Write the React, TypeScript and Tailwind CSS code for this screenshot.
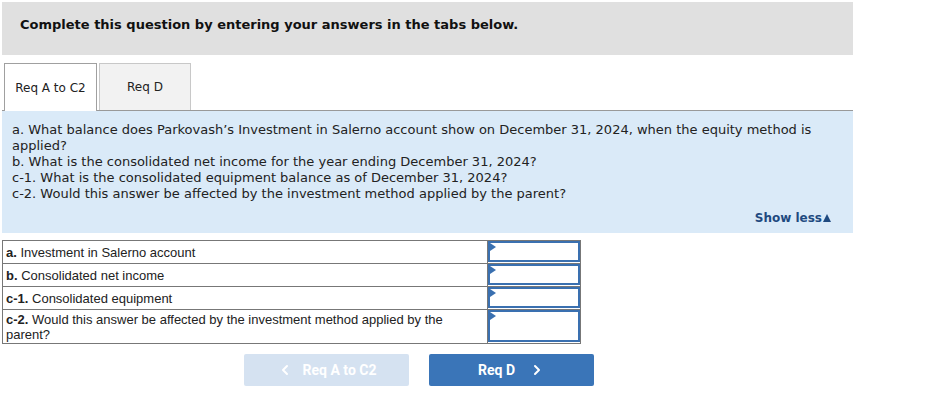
import React from 'react';
import { ChevronLeft, ChevronRight } from 'lucide-react';

const verdana = { fontFamily: '"DejaVu Sans", Verdana, sans-serif' };

const rows = [
  { tag: 'a.', text: ' Investment in Salerno account', tall: false },
  { tag: 'b.', text: ' Consolidated net income', tall: false },
  { tag: 'c-1.', text: ' Consolidated equipment', tall: false },
  { tag: 'c-2.', text: ' Would this answer be affected by the investment method applied by the parent?', tall: true },
];

const AnswerCell = ({ tall }: { tall: boolean }) => (
  <td className="border border-[#777] p-0 w-[93px] align-top">
    <div className={`relative border-2 border-[#3a70b0] bg-white ${tall ? 'h-[32px]' : 'h-[21px]'}`}>
      <span className="absolute left-0 top-0 w-0 h-0 border-y-[4px] border-y-transparent border-l-[6px] border-l-[#3a70b0]" />
    </div>
  </td>
);

export default function App() {
  return (
    <div className="w-[929px] h-[403px] bg-white pt-[2px] pl-[2px]">
      <div className="w-[851px] h-[53px] bg-[#e0e0e0] flex items-center pl-[18px] pb-[8px]">
        <p className="text-[13px] font-bold text-[#111]" style={verdana}>
          Complete this question by entering your answers in the tabs below.
        </p>
      </div>

      <div className="mt-[8px] w-[851px] flex items-end border-b border-[#999] h-[48px]">
        <div className="ml-[2px] w-[93px] h-[48px] -mb-px bg-white border border-b-0 border-[#a0a0a0] flex items-center justify-center text-[12px] text-[#222]" style={verdana}>
          Req A to C2
        </div>
        <div className="ml-[2px] w-[92px] h-[47px] bg-[#f2f2f2] border border-b-0 border-[#c8c8c8] flex items-center justify-center text-[12px] text-[#222]" style={verdana}>
          Req D
        </div>
      </div>

      <div className="w-[851px] h-[122px] bg-[#daeaf8] pt-[11px] pl-[10px] pr-[30px] relative">
        <div className="text-[13px] leading-[16px] text-[#222]" style={verdana}>
          <p>a. What balance does Parkovash’s Investment in Salerno account show on December 31, 2024, when the equity method is applied?</p>
          <p>b. What is the consolidated net income for the year ending December 31, 2024?</p>
          <p>c-1. What is the consolidated equipment balance as of December 31, 2024?</p>
          <p>c-2. Would this answer be affected by the investment method applied by the parent?</p>
        </div>
        <div className="absolute right-[22px] bottom-[8px] text-[12px] leading-[14px] font-bold text-[#1f4a80] flex items-center" style={verdana}>
          Show less
          <span className="ml-[1px] w-0 h-0 border-x-[4.5px] border-x-transparent border-b-[8px] border-b-[#1f4a80]" />
        </div>
      </div>

      <table className="mt-[7px] border-collapse w-[579px]" style={{ fontFamily: '"Liberation Sans", Arial, sans-serif' }}>
        <tbody>
          {rows.map((r) => (
            <tr key={r.tag} className={r.tall ? 'h-[34px]' : 'h-[23px]'}>
              <td className={`border border-[#777] px-[3px] text-[13px] leading-[15px] text-[#222] ${r.tall ? 'align-top pt-[2px]' : 'align-middle'}`}>
                <span className="font-bold">{r.tag}</span>
                {r.text}
              </td>
              <AnswerCell tall={r.tall} />
            </tr>
          ))}
        </tbody>
      </table>

      <div className="mt-[10px] flex gap-[20px] ml-[242px]" style={{ fontFamily: 'Roboto, sans-serif' }}>
        <button className="w-[165px] h-[32px] rounded-[2px] bg-[#d5e2f1] text-white font-bold text-[14px] flex items-center justify-center gap-[10px]">
          <ChevronLeft size={16} strokeWidth={3} />
          <span>Req A to C2</span>
        </button>
        <button className="w-[165px] h-[32px] rounded-[2px] bg-[#3a75b8] text-white font-bold text-[14px] flex items-center justify-center gap-[14px]">
          <span>Req D</span>
          <ChevronRight size={16} strokeWidth={3} />
        </button>
      </div>
    </div>
  );
}
